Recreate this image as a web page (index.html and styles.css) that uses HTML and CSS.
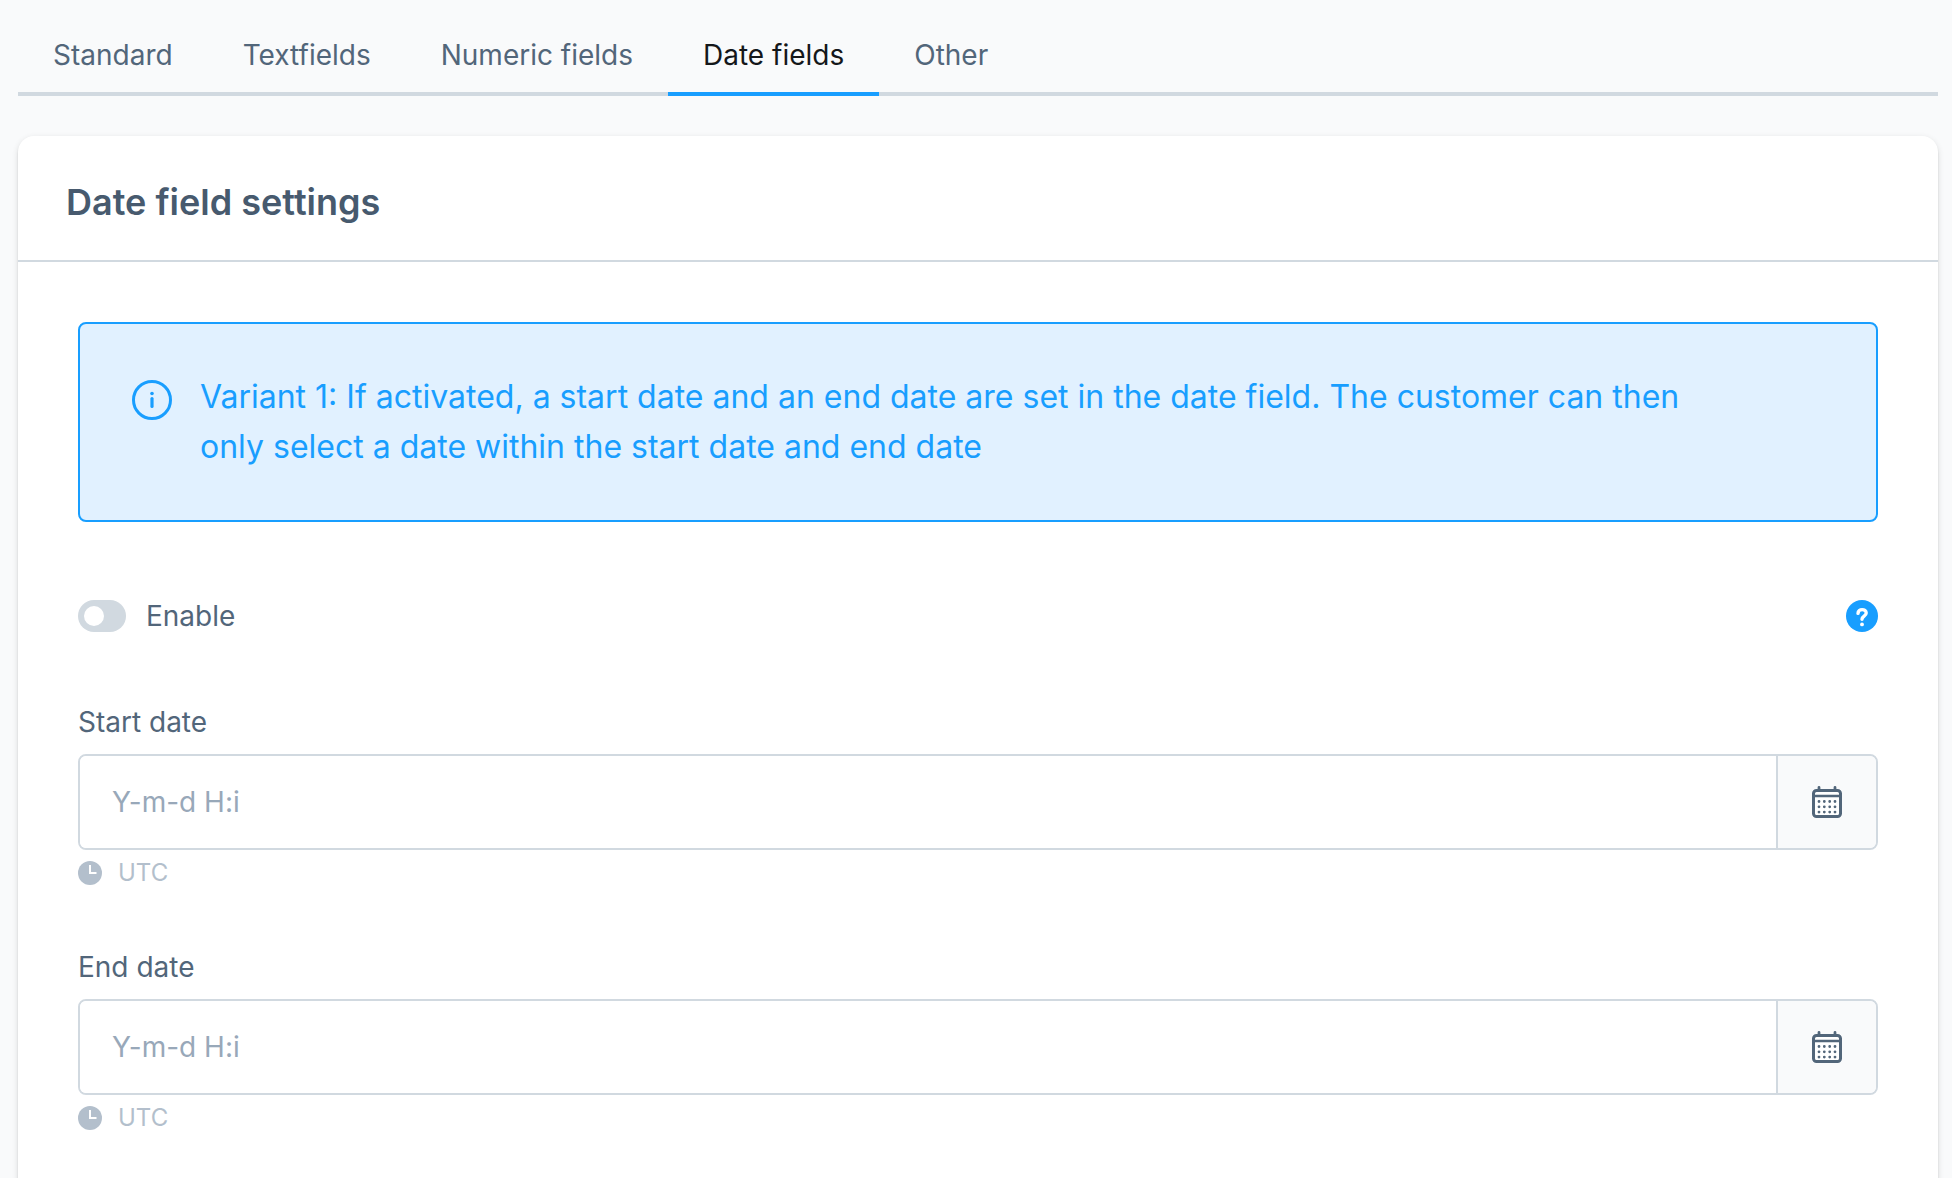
FILE: index.html
```html
<!DOCTYPE html>
<html lang="en">
<head>
<meta charset="utf-8">
<meta name="viewport" content="width=device-width, initial-scale=1">
<title>Date field settings</title>
<link rel="stylesheet" href="styles.css">
</head>
<body>
<svg class="sprite" aria-hidden="true">
  <symbol id="calendar" viewBox="0 0 32 32">
    <rect x="2.500" y="4.500" width="27" height="26" rx="3" fill="#fff" stroke="currentColor" stroke-width="3"/>
    <path d="M2 10h28" stroke="currentColor" stroke-width="2.400"/>
    <path d="M8 1.500v3M24 1.500v3" stroke="currentColor" stroke-width="2.800" stroke-linecap="round"/>
    <path d="M8 15.500h.01M13.300 15.500h.01M18.700 15.500h.01M24 15.500h.01M8 20.800h.01M13.300 20.800h.01M18.700 20.800h.01M24 20.800h.01M8 26.100h.01M13.300 26.100h.01M18.700 26.100h.01M24 26.100h.01" stroke="currentColor" stroke-width="2.800" stroke-linecap="round"/>
  </symbol>
  <symbol id="clock" viewBox="0 0 24 24">
    <circle cx="12" cy="12" r="12" fill="currentColor"/>
    <path d="M12 4v8h6.500" fill="none" stroke="#fff" stroke-width="2"/>
  </symbol>
</svg>
<nav class="tabs">
  <a class="tab" href="#standard">Standard</a>
  <a class="tab" href="#textfields">Textfields</a>
  <a class="tab" href="#numeric">Numeric fields</a>
  <a class="tab tab-active" href="#date" aria-current="page">Date fields</a>
  <a class="tab" href="#other">Other</a>
</nav>
<main class="card">
  <header class="card-header"><h1 class="card-title">Date field settings</h1></header>
  <form class="card-body">
    <div class="alert">
      <svg class="alert-icon" viewBox="0 0 40 40" aria-hidden="true">
        <circle cx="20" cy="20" r="18.500" fill="none" stroke="currentColor" stroke-width="3"/>
        <circle cx="20" cy="13.500" r="1.800" fill="currentColor"/>
        <path d="M20 18.500v8" stroke="currentColor" stroke-width="3.200" stroke-linecap="round"/>
      </svg>
      <p class="alert-text">Variant 1: If activated, a start date and an end date are set in the date field. The customer can then only select a date within the start date and end date</p>
    </div>
    <div class="switch-row">
      <input class="switch" type="checkbox" id="enable">
      <label class="switch-label" for="enable">Enable</label>
      <button class="help" type="button" aria-label="Help">
        <svg class="help-icon" viewBox="0 0 32 32" aria-hidden="true">
          <circle cx="16" cy="16" r="16" fill="#189eff"/>
          <path d="M12 13.400c0-5 8.200-5 8.200-.4 0 3.200-4.200 3-4.200 6.200" fill="none" stroke="#fff" stroke-width="3.400" stroke-linecap="round"/>
          <circle cx="16" cy="24.400" r="1.900" fill="#fff"/>
        </svg>
      </button>
    </div>
    <div class="field">
      <label class="field-label" for="start">Start date</label>
      <div class="field-box">
        <input class="field-input" type="text" id="start" placeholder="Y-m-d H:i">
        <button class="field-button" type="button" aria-label="Choose start date"><svg class="calendar-icon"><use href="#calendar"/></svg></button>
      </div>
      <div class="field-hint"><svg class="clock-icon"><use href="#clock"/></svg><span>UTC</span></div>
    </div>
    <div class="field">
      <label class="field-label" for="end">End date</label>
      <div class="field-box">
        <input class="field-input" type="text" id="end" placeholder="Y-m-d H:i">
        <button class="field-button" type="button" aria-label="Choose end date"><svg class="calendar-icon"><use href="#calendar"/></svg></button>
      </div>
      <div class="field-hint"><svg class="clock-icon"><use href="#clock"/></svg><span>UTC</span></div>
    </div>
  </form>
</main>
</body>
</html>
```

FILE: styles.css
```css
* { box-sizing: border-box; }

body {
  display: flex;
  flex-direction: column;
  min-height: 100vh;
  margin: 0;
  padding: 18px 14px 0 18px;
  background: #f9fafb;
  color: #52667a;
  font: 28px/40px Inter, "Liberation Sans", sans-serif;
  font-optical-sizing: none;
}

.sprite { display: none; }

.tabs {
  display: flex;
  border-bottom: 4px solid #d1d9e0;
}

.tab {
  margin-bottom: -4px;
  padding: 17px 35px;
  border-bottom: 4px solid transparent;
  color: inherit;
  text-decoration: none;
}

.tab-active {
  border-color: #189eff;
  color: #14171a;
}

.card {
  flex: 1;
  margin-top: 40px;
  border-radius: 16px 16px 0 0;
  background: #fff;
  box-shadow: 0 2px 2px rgba(0, 0, 0, .08), 0 4px 2px rgba(0, 0, 0, .06), 0 2px 6px rgba(0, 0, 0, .12);
}

.card-header {
  padding: 44px 48px 36px;
  border-bottom: 2px solid #d1d9e0;
}

.card-title {
  margin: 0;
  color: #475a6e;
  font-size: 36px;
  font-weight: 600;
  line-height: 44px;
}

.card-body { padding: 60px; }

.alert {
  display: flex;
  gap: 28px;
  padding: 48px 160px 48px 52px;
  border: 2px solid #189eff;
  border-radius: 8px;
  background: #e1f1ff;
  color: #189eff;
  font-size: 32px;
  line-height: 50px;
}

.alert-icon {
  flex: none;
  width: 40px;
  height: 40px;
  margin-top: 8px;
}

.alert-text { margin: 0; }

.switch-row {
  display: flex;
  align-items: center;
  margin-top: 74px;
}

.switch {
  display: flex;
  align-items: center;
  width: 48px;
  height: 32px;
  margin: 0;
  padding: 0 6px;
  border-radius: 16px;
  background: #d1d9e0;
  appearance: none;
}

.switch::before {
  width: 20px;
  height: 20px;
  border-radius: 50%;
  background: #fff;
  content: "";
}

.switch:checked {
  justify-content: flex-end;
  background: #189eff;
}

.switch-label { margin-left: 20px; }

.help {
  margin-left: auto;
  padding: 0;
  border: 0;
  background: none;
}

.help-icon {
  display: block;
  width: 32px;
  height: 32px;
}

.field { margin-top: 60px; }
.switch-row + .field { margin-top: 66px; }

.field-label { display: block; }

.field-box {
  display: flex;
  height: 96px;
  margin-top: 12px;
  border: 2px solid #d1d9e0;
  border-radius: 8px;
  overflow: hidden;
}

.field-input {
  flex: 1;
  min-width: 0;
  padding: 0 32px;
  border: 0;
  background: #fff;
  color: inherit;
  font: inherit;
}

.field-input::placeholder {
  color: #98a8b9;
  opacity: 1;
}

.field-button {
  display: flex;
  align-items: center;
  justify-content: center;
  width: 100px;
  padding: 0;
  border: 0;
  border-left: 2px solid #d1d9e0;
  background: #f9fafb;
  color: #52667a;
}

.calendar-icon {
  width: 32px;
  height: 32px;
}

.field-hint {
  display: flex;
  align-items: center;
  gap: 16px;
  margin-top: 9px;
  color: #b3bfcc;
  font-size: 24px;
  line-height: 28px;
}

.clock-icon {
  width: 24px;
  height: 24px;
}
```
